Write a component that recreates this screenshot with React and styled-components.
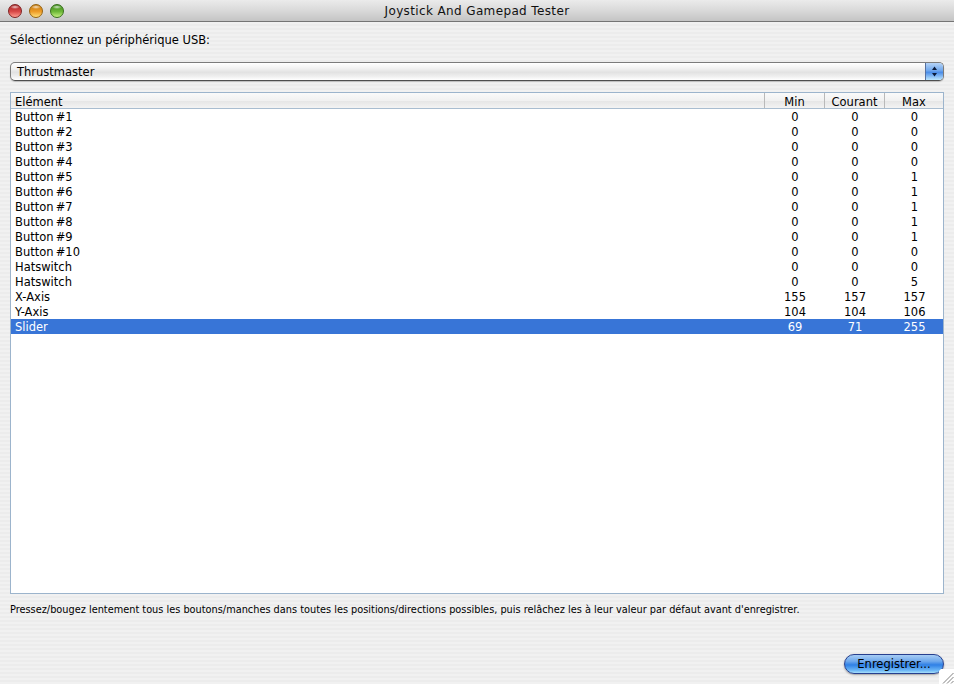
import React from "react";
import styled, { createGlobalStyle } from "styled-components";

const rows = [
  ["Button #1", 0, 0, 0],
  ["Button #2", 0, 0, 0],
  ["Button #3", 0, 0, 0],
  ["Button #4", 0, 0, 0],
  ["Button #5", 0, 0, 1],
  ["Button #6", 0, 0, 1],
  ["Button #7", 0, 0, 1],
  ["Button #8", 0, 0, 1],
  ["Button #9", 0, 0, 1],
  ["Button #10", 0, 0, 0],
  ["Hatswitch", 0, 0, 0],
  ["Hatswitch", 0, 0, 5],
  ["X-Axis", 155, 157, 157],
  ["Y-Axis", 104, 104, 106],
  ["Slider", 69, 71, 255],
];

const GlobalStyle = createGlobalStyle`
  html, body {
    margin: 0;
    padding: 0;
    overflow: hidden;
  }
  body {
    font-family: "DejaVu Sans", "Liberation Sans", sans-serif;
    color: #000;
  }
`;

const Window = styled.div`
  position: relative;
  width: 954px;
  height: 684px;
  display: flex;
  flex-direction: column;
  overflow: hidden;
  background: repeating-linear-gradient(to bottom, #ececec 0, #ececec 2px, #f1f1f1 2px, #f1f1f1 4px);
`;
const TitleBar = styled.div`
  height: 21px;
  flex: none;
  position: relative;
  display: flex;
  align-items: center;
  justify-content: center;
  border-bottom: 1px solid #757575;
  background: linear-gradient(to bottom, #ebebeb 0, #d9d9d9 50%, #c4c4c4 100%);
  font-size: 12px;
  letter-spacing: 0.37px;
  color: #111;
`;
const Lights = styled.div`
  position: absolute;
  left: 8px;
  top: 4px;
  display: flex;
  gap: 7px;
`;
const Light = styled.span`
  width: 14px;
  height: 14px;
  border-radius: 50%;
  border: 1px solid ${(p) => p.$edge};
  box-sizing: border-box;
  background:
    radial-gradient(ellipse 5px 2px at 50% 2px, rgba(255, 255, 255, 0.75) 0, rgba(255, 255, 255, 0) 100%),
    linear-gradient(to bottom, ${(p) => p.$dark} 0, ${(p) => p.$base} 55%, ${(p) => p.$glow} 100%);
`;
const Content = styled.div`
  flex: 1;
  display: flex;
  flex-direction: column;
  padding: 0 10px;
`;
const Label = styled.div`
  font-size: 11.5px;
  line-height: 15px;
  margin-top: 11px;
`;
const Select = styled.div`
  margin-top: 14px;
  width: 934px;
  height: 19px;
  box-sizing: border-box;
  border: 1px solid #7b7b7b;
  border-bottom-color: #4f4f4f;
  border-radius: 5px;
  display: flex;
  align-items: center;
  justify-content: space-between;
  padding-left: 6px;
  font-size: 11.5px;
  line-height: 16px;
  background: linear-gradient(to bottom, #ffffff 0, #f2f2f2 30%, #e2e2e2 55%, #f0f0f0 80%, #fff 100%);
  box-shadow: 0 1px 1px rgba(0, 0, 0, 0.2);
`;
const Stepper = styled.span`
  width: 17px;
  height: 17px;
  border-radius: 0 4px 4px 0;
  border-left: 1px solid #56709f;
  background: linear-gradient(to bottom, #b5d3f6 0, #6ea6ec 45%, #4a8ce8 55%, #bde6fd 100%);
  display: flex;
  align-items: center;
  justify-content: center;
`;
const Table = styled.div`
  margin-top: 11px;
  width: 934px;
  height: 502px;
  box-sizing: border-box;
  border: 1px solid #9cb4cc;
  background: #fff;
`;
const Row = styled.div`
  display: grid;
  grid-template-columns: 1fr 60px 60px 59px;
  font-size: 11.5px;
  line-height: 17px;
  height: 15px;
  word-spacing: -1.5px;
  background: ${(p) => (p.$selected ? "#3875d7" : "transparent")};
  color: ${(p) => (p.$selected ? "#fff" : "#000")};
`;
const HeaderRow = styled(Row)`
  box-sizing: content-box;
  line-height: 19px;
  border-bottom: 1px solid #a9bdd0;
  background: linear-gradient(to bottom, #fafafa 0, #f1f1f1 50%, #e6e6e6 55%, #f3f3f3 100%);
`;
const NameCell = styled.div`
  padding-left: 4px;
`;
const NumCell = styled.div`
  text-align: center;
  padding-left: 2px;
`;
const HeadCell = styled.div`
  text-align: center;
  height: 15px;
  border-left: 1px solid #b9b9b9;
`;
const Note = styled.div`
  margin-top: 9px;
  font-size: 9.78px;
  line-height: 14px;
  white-space: nowrap;
`;
const Footer = styled.div`
  margin-top: auto;
  margin-bottom: 10px;
  display: flex;
  justify-content: flex-end;
`;
const SaveButton = styled.button`
  width: 100px;
  height: 20px;
  padding: 0 0 1px 0;
  font: 11.5px "DejaVu Sans", sans-serif;
  color: #000;
  border: 1px solid #27408f;
  border-radius: 10px;
  background: linear-gradient(to bottom, #a7cdf5 0, #6ea8ec 35%, #2f80e6 55%, #6bb6f6 85%, #a8e0fb 100%);
  box-shadow: 0 1px 2px rgba(0, 0, 0, 0.35);
`;
const Grip = styled.svg`
  position: absolute;
  right: 0;
  bottom: 0;
`;

const App = () => {
  return (
    <Window>
      <GlobalStyle />
      <TitleBar>
        <Lights>
          <Light $edge="#7f2222" $base="#d94a48" $glow="#ff9d90" $dark="#a82424" />
          <Light $edge="#96620f" $base="#ee9c28" $glow="#ffe078" $dark="#c47a0e" />
          <Light $edge="#37701a" $base="#6db838" $glow="#c4f080" $dark="#3f8a1c" />
        </Lights>
        Joystick And Gamepad Tester
      </TitleBar>
      <Content>
        <Label>Sélectionnez un périphérique USB:</Label>
        <Select>
          <span>Thrustmaster</span>
          <Stepper>
            <svg width="7" height="11" viewBox="0 0 7 11">
              <path d="M3.5 0.5 L6 4 L1 4 Z M1 7 L6 7 L3.5 10.5 Z" fill="#0a1a3a" />
            </svg>
          </Stepper>
        </Select>
        <Table>
          <HeaderRow>
            <NameCell>Elément</NameCell>
            <HeadCell>Min</HeadCell>
            <HeadCell>Courant</HeadCell>
            <HeadCell>Max</HeadCell>
          </HeaderRow>
          {rows.map(([name, min, cur, max], i) => (
            <Row key={i} $selected={name === "Slider"}>
              <NameCell>{name}</NameCell>
              <NumCell>{min}</NumCell>
              <NumCell>{cur}</NumCell>
              <NumCell>{max}</NumCell>
            </Row>
          ))}
        </Table>
        <Note>
          Pressez/bougez lentement tous les boutons/manches dans toutes les positions/directions possibles, puis relâchez les à leur valeur par défaut avant d'enregistrer.
        </Note>
        <Footer>
          <SaveButton>Enregistrer...</SaveButton>
        </Footer>
      </Content>
      <Grip width="15" height="15" viewBox="0 0 15 15">
        <path d="M2 0 H15 V15 H0 V2 Z" fill="#fff" />
        <path d="M4 14.5 L14.5 4 M8 14.5 L14.5 8 M12 14.5 L14.5 12" stroke="#808080" strokeWidth="1" />
      </Grip>
    </Window>
  );
};

export default App;
